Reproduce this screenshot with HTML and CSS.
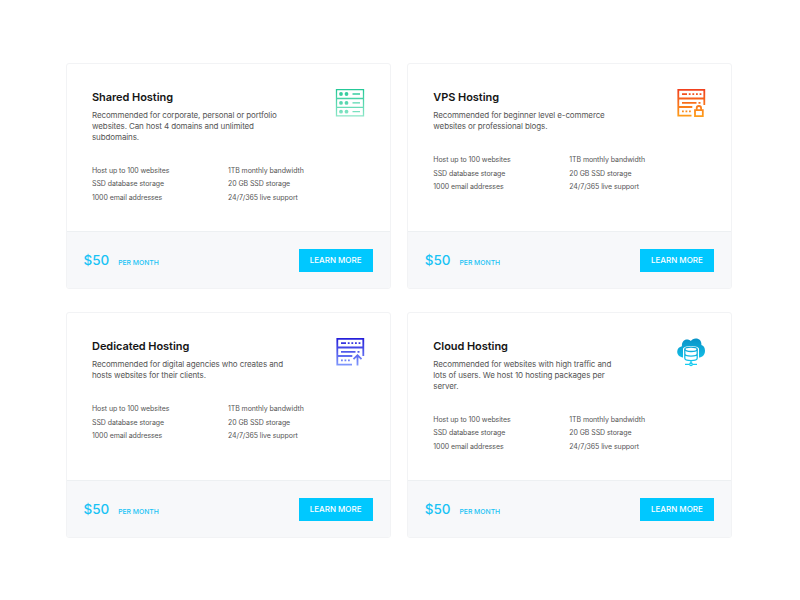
FILE: index.html
```html
<!DOCTYPE html>
<html lang="en">
<head>
<meta charset="utf-8">
<title>Hosting plans</title>
<link rel="stylesheet" href="styles.css">
</head>
<body>
<main class="plans">
  <article class="card">
    <div class="card-body">
      <svg class="icon" viewBox="0 0 30 30" fill="none" stroke="url(#green)" stroke-width="1.3">
        <defs><linearGradient id="green" gradientUnits="userSpaceOnUse" x1="0" y1="0" x2="0" y2="30"><stop stop-color="#1fc795"/><stop offset="1" stop-color="#92e8ca"/></linearGradient></defs>
        <path d="M1.5 1.6h27v8.9h-27zM1.5 10.5h27v8.8h-27zM1.5 19.3h27v8.6h-27z"/>
        <path d="M17.500 6h7.500M17.500 14.900h7.500M17.500 23.700h7.500"/>
        <g fill="url(#green)" stroke="none"><circle cx="6" cy="6" r="1.900"/><circle cx="11.500" cy="6" r="1.900"/><circle cx="6" cy="14.900" r="1.900"/><circle cx="11.500" cy="14.900" r="1.900"/><circle cx="6" cy="23.700" r="1.900"/><circle cx="11.500" cy="23.700" r="1.900"/></g>
      </svg>
      <h2>Shared Hosting</h2>
      <p>Recommended for corporate, personal or portfolio<br>websites. Can host 4 domains and unlimited<br>subdomains.</p>
      <ul><li>Host up to 100 websites</li><li>1TB monthly bandwidth</li><li>SSD database storage</li><li>20 GB SSD storage</li><li>1000 email addresses</li><li>24/7/365 live support</li></ul>
    </div>
    <footer><strong>$50</strong><span>PER MONTH</span><a class="button">LEARN MORE</a></footer>
  </article>

  <article class="card">
    <div class="card-body">
      <svg class="icon" viewBox="0 0 30 30" fill="none" stroke="url(#orange)" stroke-width="1.8">
        <defs><linearGradient id="orange" gradientUnits="userSpaceOnUse" x1="0" y1="0" x2="0" y2="30"><stop stop-color="#f03c1e"/><stop offset="1" stop-color="#ffa31a"/></linearGradient></defs>
        <path d="M15.500 27.700H2.300V1.900h26v15M2.300 10.500h26M2.300 19h14"/>
        <path d="M6 6.200h5M12.800 6.200h1.800M16.400 6.200h1.800M20 6.200h1.800M23.600 6.200h1.800M6 14.800h14.500M22.500 14.800h2M6 23.300h1.800M9.500 23.300h1.800M13 23.300h1.800"/>
        <path d="M19 22.100h7.800v6H19zM20.700 22v-1.800a2.200 2.200 0 0 1 4.400 0V22"/>
      </svg>
      <h2>VPS Hosting</h2>
      <p>Recommended for beginner level e-commerce<br>websites or professional blogs.</p>
      <ul><li>Host up to 100 websites</li><li>1TB monthly bandwidth</li><li>SSD database storage</li><li>20 GB SSD storage</li><li>1000 email addresses</li><li>24/7/365 live support</li></ul>
    </div>
    <footer><strong>$50</strong><span>PER MONTH</span><a class="button">LEARN MORE</a></footer>
  </article>

  <article class="card">
    <div class="card-body">
      <svg class="icon" viewBox="0 0 30 30" fill="none" stroke="url(#blue)" stroke-width="1.800">
        <defs><linearGradient id="blue" gradientUnits="userSpaceOnUse" x1="0" y1="0" x2="0" y2="30"><stop stop-color="#2018d8"/><stop offset="1" stop-color="#86a0ff"/></linearGradient></defs>
        <path d="M17 27.700H2.300V1.900h26v17M2.300 10.500h26M2.300 19h15"/>
        <path d="M6 6.200h5M12.800 6.200h1.800M16.400 6.200h1.800M20 6.200h1.800M23.600 6.200h1.800M6 14.800h14.500M22.500 14.800h2M6 23.300h1.800M9.500 23.300h1.800M13 23.300h1.800"/>
        <path d="M22.500 28.500V18.500M18.500 22.200l4-4 4 4"/>
      </svg>
      <h2>Dedicated Hosting</h2>
      <p>Recommended for digital agencies who creates and<br>hosts websites for their clients.</p>
      <ul><li>Host up to 100 websites</li><li>1TB monthly bandwidth</li><li>SSD database storage</li><li>20 GB SSD storage</li><li>1000 email addresses</li><li>24/7/365 live support</li></ul>
    </div>
    <footer><strong>$50</strong><span>PER MONTH</span><a class="button">LEARN MORE</a></footer>
  </article>

  <article class="card">
    <div class="card-body">
      <svg class="icon" viewBox="0 0 30 30">
        <defs><linearGradient id="cyan" gradientUnits="userSpaceOnUse" x1="0" y1="0" x2="0" y2="30"><stop stop-color="#078fc5"/><stop offset="1" stop-color="#18d2f5"/></linearGradient></defs>
        <path fill="url(#cyan)" d="M8 20.500C4 20.500 1.200 18 1.200 14.700c0-3 2-5 4.700-5.500C5.700 4.800 8 2.500 11 2.500c1.500 0 2.800.5 3.800 1.500C16 2.500 17.500 1.500 19.700 1.500c3.800 0 6 2.700 5.700 6.500 2.300.7 3.600 3 3.600 5.700 0 4-2.700 6.800-6.500 6.800z"/>
        <path fill="#fff" d="M7 12c0-4 16-4 16 0v10c0 4-16 4-16 0z"/>
        <g fill="none" stroke="url(#cyan)" stroke-width="1.300"><ellipse cx="15" cy="12.300" rx="6.200" ry="2.200"/><path d="M8.800 12.300v9c0 3 12.400 3 12.400 0v-9M8.800 16.800c0 3 12.400 3 12.400 0M15 23.500v3M9 27.300h4.500M16.500 27.300H21"/><circle cx="15" cy="27.300" r="1.300"/></g>
      </svg>
      <h2>Cloud Hosting</h2>
      <p>Recommended for websites with high traffic and<br>lots of users. We host 10 hosting packages per<br>server.</p>
      <ul><li>Host up to 100 websites</li><li>1TB monthly bandwidth</li><li>SSD database storage</li><li>20 GB SSD storage</li><li>1000 email addresses</li><li>24/7/365 live support</li></ul>
    </div>
    <footer><strong>$50</strong><span>PER MONTH</span><a class="button">LEARN MORE</a></footer>
  </article>
</main>
</body>
</html>
```
FILE: styles.css
```css
* { box-sizing: border-box; }
body { margin: 0; background: #fff; font-family: Inter, "Liberation Sans", sans-serif; color: #555; }
.plans { display: grid; grid-template-columns: 324.600px 324.600px; grid-auto-rows: 226px; gap: 23px 16.700px; padding: 63px 0 0 66px; }
.card { display: flex; flex-direction: column; border: 1px solid #f2f3f5; border-radius: 3px; overflow: hidden; }
.card-body { flex: 1; padding: 25px 24.500px 0 25px; }
.icon { float: right; width: 30px; height: 30px; margin-top: -1px; }
h2 { margin: 0; font-size: 11px; line-height: 16px; font-weight: 600; letter-spacing: -.06px; color: #151515; white-space: nowrap; }
p { margin: 5.200px 0 0; font-size: 8px; line-height: 10.700px; letter-spacing: -.11px; white-space: nowrap; }
ul { display: grid; grid-template-columns: 136px 1fr; margin: 21.400px 0 0; padding: 0; list-style: none; font-size: 7px; line-height: 13.600px; letter-spacing: -.08px; white-space: nowrap; }
footer { display: flex; align-items: center; height: 57px; padding: 0 17px 0 16.500px; background: #f7f8fa; border-top: 1px solid #edf0f2; color: #19c3f5; }
strong { font-size: 13.500px; font-weight: 550; letter-spacing: -.05px; }
footer span { margin: 4px 0 0 9px; font-size: 6.800px; font-weight: 500; }
.button { margin-left: auto; width: 74px; height: 23px; background: #00c8ff; color: #fff; font-size: 8px; font-weight: 500; line-height: 23px; text-align: center; }
```
